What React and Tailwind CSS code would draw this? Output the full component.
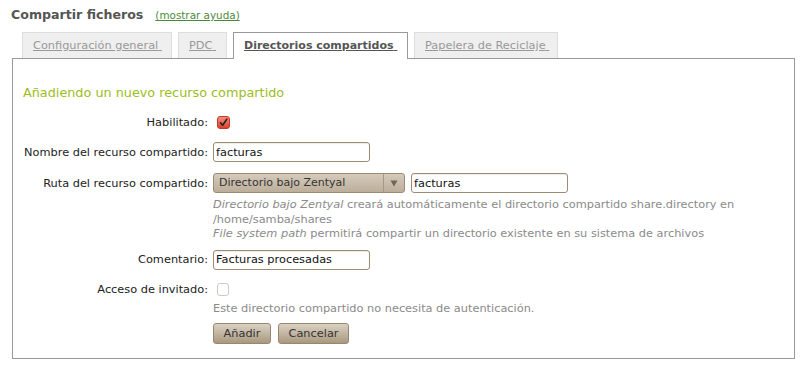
import React from "react";

function Check({ checked }) {
  if (checked) {
    return (
      <span className="w-[13px] h-[13px] rounded-[3px] border border-[#c0392b] bg-gradient-to-b from-[#f58a78] to-[#dc3f2c] flex items-center justify-center">
        <svg width="11" height="11" viewBox="0 0 11 11">
          <path d="M2.5 5.8 L4.6 8.2 L8.8 2.2" fill="none" stroke="#222" strokeWidth="1.6" strokeLinecap="round" strokeLinejoin="round" />
        </svg>
      </span>
    );
  }
  return <span className="w-[12px] h-[13px] rounded-[3px] border border-[#cfc9c0] bg-white block" />;
}

function Field({ value, width = "w-[157px]" }) {
  return (
    <div className={`${width} h-[20px] border border-[#9d8c74] rounded-[3px] bg-white flex items-center pl-[2px] text-[11.33px] text-[#111] shadow-[inset_0_1px_1px_rgba(0,0,0,0.08)]`}>
      {value}
    </div>
  );
}

function Tab({ label, active, w }) {
  if (active) {
    return (
      <div className={`${w} h-[27px] -mb-px pl-[10px] bg-white border border-b-0 border-[#999] flex items-center`}>
        <span className="underline font-bold text-[#555] text-[11px] whitespace-nowrap">{label}&nbsp;</span>
      </div>
    );
  }
  return (
    <div className={`${w} h-[26px] pl-[10px] bg-[#efefef] border border-b-0 border-[#ddd] flex items-center`}>
      <span className="underline text-[#999] text-[11.33px] whitespace-nowrap">{label}&nbsp;</span>
    </div>
  );
}

export default function App() {
  return (
    <div className="font-['DejaVu_Sans',sans-serif] text-[11.33px] text-[#222] bg-white w-[808px] h-[375px] overflow-hidden">
      <div className="pl-[11px] pt-[6px] h-[32px] flex items-baseline">
        <span className="text-[12.6px] font-bold text-[#555]">Compartir ficheros</span>
        <span className="ml-[12px] text-[10.4px] text-[#4b8a3c] underline">(mostrar ayuda)</span>
      </div>
      <div className="pl-[22px] flex items-end gap-[6px] relative z-10">
        <Tab w="w-[150px]" label="Configuración general" />
        <Tab w="w-[49px]" label="PDC" />
        <Tab w="w-[175px]" label="Directorios compartidos" active />
        <Tab w="w-[144px]" label="Papelera de Reciclaje" />
      </div>
      <div className="ml-[12px] w-[783px] h-[301px] border border-[#999] flex flex-col">
        <div className="pl-[10px] mt-[26px] h-[16px] leading-[16px] text-[12.8px] text-[#9cbd1a]">
          Añadiendo un nuevo recurso compartido
        </div>
        <div className="grid grid-cols-[195px_1fr] gap-x-[5px] mt-[13px]">
          <div className="h-[16px] flex items-center justify-end">Habilitado:</div>
          <div className="h-[16px] flex items-center pl-[4px]"><Check checked /></div>

          <div className="mt-[12px] h-[20px] flex items-center justify-end">Nombre del recurso compartido:</div>
          <div className="mt-[12px]"><Field value="facturas" /></div>

          <div className="mt-[11px] h-[20px] flex items-center justify-end">Ruta del recurso compartido:</div>
          <div className="mt-[11px]">
            <div className="flex items-center gap-[6px]">
              <div className="w-[192px] h-[20px] border border-[#9d8c74] rounded-[3px] bg-gradient-to-b from-[#d5cbbc] to-[#bcae9a] flex">
                <div className="flex-1 flex items-center pl-[5px] text-[11px] text-[#333]">Directorio bajo Zentyal</div>
                <div className="w-[21px] border-l border-[#a89882] flex items-center justify-center">
                  <svg width="8" height="7" viewBox="0 0 8 7"><path d="M0.5 0.5 L7.5 0.5 L4 6.5 Z" fill="#6b665e" /></svg>
                </div>
              </div>
              <Field value="facturas" />
            </div>
            <div className="mt-[4px] leading-[14.5px] text-[#8a8a8a]">
              <div><i>Directorio bajo Zentyal</i> creará automáticamente el directorio compartido share.directory en</div>
              <div>/home/samba/shares</div>
              <div><i>File system path</i> permitirá compartir un directorio existente en su sistema de archivos</div>
            </div>
          </div>

          <div className="mt-[9px] h-[20px] flex items-center justify-end">Comentario:</div>
          <div className="mt-[9px]"><Field value="Facturas procesadas" /></div>

          <div className="mt-[12px] h-[16px] flex items-center justify-end">Acceso de invitado:</div>
          <div className="mt-[12px]">
            <div className="h-[16px] flex items-center pl-[4px]"><Check /></div>
            <div className="mt-[3px] leading-[15px] text-[#8a8a8a]">Este directorio compartido no necesita de autenticación.</div>
            <div className="mt-[7px] flex gap-[7px]">
              <div className="w-[58px] h-[21px] rounded-[3px] border border-[#98876f] bg-gradient-to-b from-[#dbd2c4] to-[#a9997f] flex items-center justify-center text-[#333]">Añadir</div>
              <div className="w-[71px] h-[21px] rounded-[3px] border border-[#98876f] bg-gradient-to-b from-[#dbd2c4] to-[#a9997f] flex items-center justify-center text-[#333]">Cancelar</div>
            </div>
          </div>
        </div>
      </div>
    </div>
  );
}
